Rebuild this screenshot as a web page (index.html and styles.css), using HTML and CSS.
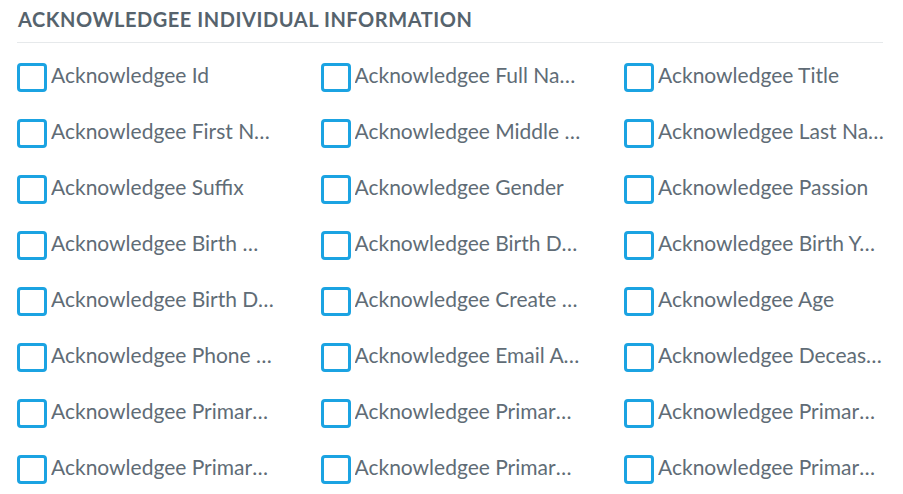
FILE: index.html
```html
<!DOCTYPE html>
<html lang="en">
<head>
    <meta charset="UTF-8">
    <title>Acknowledgee Individual Information</title>
    <link rel="stylesheet" href="styles.css">
</head>
<body>
    <div class="section">
        <h2 class="section-title">Acknowledgee Individual Information</h2>
        <div class="field-grid">
            <label class="field"><span class="box"></span><span class="name">Acknowledgee Id</span></label>
            <label class="field"><span class="box"></span><span class="name">Acknowledgee Full Name</span></label>
            <label class="field"><span class="box"></span><span class="name">Acknowledgee Title</span></label>

            <label class="field"><span class="box"></span><span class="name">Acknowledgee First Name</span></label>
            <label class="field"><span class="box"></span><span class="name">Acknowledgee Middle Name</span></label>
            <label class="field"><span class="box"></span><span class="name">Acknowledgee Last Name</span></label>

            <label class="field"><span class="box"></span><span class="name">Acknowledgee Suffix</span></label>
            <label class="field"><span class="box"></span><span class="name">Acknowledgee Gender</span></label>
            <label class="field"><span class="box"></span><span class="name">Acknowledgee Passion</span></label>

            <label class="field"><span class="box"></span><span class="name">Acknowledgee Birth Month</span></label>
            <label class="field"><span class="box"></span><span class="name">Acknowledgee Birth Day</span></label>
            <label class="field"><span class="box"></span><span class="name">Acknowledgee Birth Year</span></label>

            <label class="field"><span class="box"></span><span class="name">Acknowledgee Birth Date</span></label>
            <label class="field"><span class="box"></span><span class="name">Acknowledgee Create Date</span></label>
            <label class="field"><span class="box"></span><span class="name">Acknowledgee Age</span></label>

            <label class="field"><span class="box"></span><span class="name">Acknowledgee Phone Number</span></label>
            <label class="field"><span class="box"></span><span class="name">Acknowledgee Email Address</span></label>
            <label class="field"><span class="box"></span><span class="name">Acknowledgee Deceased</span></label>

            <label class="field"><span class="box"></span><span class="name">Acknowledgee Primary Address</span></label>
            <label class="field"><span class="box"></span><span class="name">Acknowledgee Primary City</span></label>
            <label class="field"><span class="box"></span><span class="name">Acknowledgee Primary State</span></label>

            <label class="field"><span class="box"></span><span class="name">Acknowledgee Primary Zip</span></label>
            <label class="field"><span class="box"></span><span class="name">Acknowledgee Primary Country</span></label>
            <label class="field"><span class="box"></span><span class="name">Acknowledgee Primary Phone</span></label>
        </div>
    </div>
</body>
</html>
```

FILE: styles.css
```css
body {
    font-family: Lato, 'Open Sans', sans-serif;
    margin: 0;
    background: #ffffff;
    color: #606c76;
}

.section {
    padding: 7px 20px 0 17px;
}

.section-title {
    margin: 0;
    padding: 0 0 11px 1px;
    font-size: 20px;
    font-weight: 700;
    letter-spacing: 0.55px;
    text-transform: uppercase;
    color: #56636d;
    line-height: 24px;
    border-bottom: 1px solid #e6e9eb;
}

.field-grid {
    display: grid;
    grid-template-columns: repeat(3, 303.5px);
    grid-auto-rows: 56px;
    padding-top: 19px;
}

.field {
    display: flex;
    align-items: center;
    gap: 4px;
    height: 30px;
    cursor: pointer;
}

.box {
    flex: none;
    width: 24px;
    height: 23px;
    border: 3px solid #1ba3e2;
    border-radius: 4px;
    background: #fff;
}

.name {
    max-width: 226px;
    white-space: nowrap;
    overflow: hidden;
    text-overflow: ellipsis;
    font-size: 21px;
    line-height: 25px;
    margin-top: -6px;
}
```
